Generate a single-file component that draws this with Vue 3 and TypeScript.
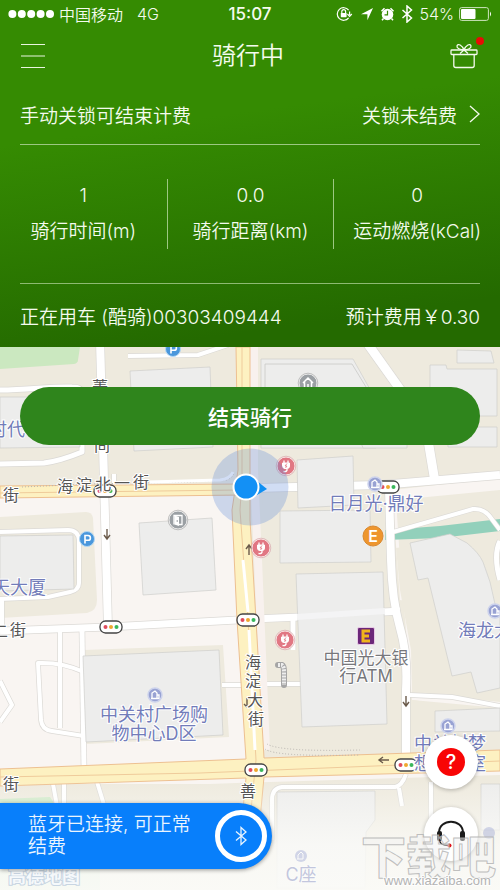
<script setup lang="ts">
interface Stat { value: string; label: string }
interface Road { d: string; w: number }
interface Label { x: number; y: number; text: string; kind: 'street' | 'place' | 'bank'; anchor?: 'start' | 'middle' | 'end' }
interface Point { x: number; y: number }

const stats: Stat[] = [
  { value: '1', label: '骑行时间(m)' },
  { value: '0.0', label: '骑行距离(km)' },
  { value: '0', label: '运动燃烧(kCal)' },
]

const blocks: string[] = [
  'M0 517L86 512Q92 512 93 518L97 600Q97 611 87 613L0 618Z',
  'M84 650L223 645L229 737L86 744Z',
  'M262 499L383 493L388 520L400 610L404 672L398 728Q393 740 384 742L276 748Q268 735 266 720Z',
  'M396 548L497 534L500 545V702L412 693L411 650L400 590Z',
  'M412 700L500 708V748L411 750Z',
  'M0 792L236 783L500 775V890H0Z',
]

const roads: Road[] = [
  { d: 'M0 390C30 390 50 386 72 387Q82 387 82 394V452Q60 461 44 463L0 464', w: 5 },
  { d: 'M128 356L198 355L228 345', w: 4 },
  { d: 'M365 340L402 392L428 440L435 482', w: 9 },
  { d: 'M100 340L104 480L108 628', w: 8 },
  { d: 'M0 631L108 627L237 620', w: 7 },
  { d: 'M252 619L300 617L400 611', w: 7 },
  { d: 'M252 488L380 485L440 480L500 475', w: 8 },
  { d: 'M389 488L391 560Q392 600 400 628Q408 655 406 690V756', w: 8 },
  { d: 'M393 532L473 509Q484 508 491 518L500 530', w: 4 },
  { d: 'M500 541Q493 555 500 580', w: 5 },
  { d: 'M0 532L68 530Q78 530 79 540V583Q79 590 70 592L48 597L0 599', w: 4 },
  { d: 'M2 598V626', w: 4 },
  { d: 'M60 632V728', w: 4 },
  { d: 'M82 631L84 770', w: 5 },
  { d: 'M84 672Q62 662 38 663L41 720Q42 730 52 731L84 736', w: 4 },
  { d: 'M0 681L12 705L0 722', w: 4 },
  { d: 'M293 618V650', w: 5 },
  { d: 'M222 685H248M262 684H302', w: 4 },
  { d: 'M410 695L452 697L500 706', w: 4 },
  { d: 'M114 474V490', w: 4 },
  { d: 'M272 840V800Q272 788 282 787L395 787Q402 786 406 774M399 788L402 806', w: 4 },
  { d: 'M431 782V820', w: 4 },
  { d: 'M53 784L57 806M97 782L105 808M64 783V803', w: 4 },
]

const buildings: string[] = [
  'M0 397H80V447L0 448Z',
  'M130 371L210 367L213 447L134 451Z',
  'M261 359H353L376 400V448H261Z',
  'M457 350L491 351L494 363H457Z',
  'M430 365H446L447 369H497V416H430Z',
  'M448 427H497V447H448Z',
  'M360 440H407V448H363Z',
  'M297 460L353 456L354 505L298 508Z',
  'M280 511L370 510L371 562L280 563Z',
  'M296 574L383 572L387 724L302 727Z',
  'M410 543L450 534L467 543Q479 553 483 562Q491 581 495 604L500 610V688L477 693L471 672L452 676L428 578L418 580Z',
  'M139 523L212 518L216 590L143 595Z',
  'M0 536L73 535L74 589L0 591Z',
  'M83 656L219 650L223 735L86 742Z',
  'M435 711L500 708V731L435 732Z',
  'M277 792L375 791V820L366 832L365 888H277Z',
  'M481 784H500V830H481Z',
]

const lights: Point[] = [
  { x: 105, y: 491 }, { x: 388, y: 487 }, { x: 111, y: 627 },
  { x: 248, y: 620 }, { x: 256, y: 770 }, { x: 406, y: 765 },
]
const parking: Point[] = [{ x: 173, y: 349 }, { x: 87, y: 539 }]
const charging: Point[] = [{ x: 286, y: 466 }, { x: 261, y: 548 }, { x: 285, y: 640 }]
const offices: Point[] = [{ x: 375, y: 484 }, { x: 155, y: 695 }, { x: 495, y: 611 }, { x: 448, y: 726 }]

const spread = (chars: string, points: [number, number][]): Label[] =>
  points.map(([x, y], i) => ({ x, y, text: chars[i], kind: 'street', anchor: 'middle' }))

const labels: Label[] = [
  ...spread('海淀北一街', [[65, 492], [84, 491], [103, 490], [122, 489], [141, 488]]),
  ...spread('海淀大街', [[253, 668], [253, 687], [255, 706], [256, 725]]),
  ...spread('街二街街善', [[11, 501], [0, 637], [18, 636], [11, 790], [248, 797]]),
  ...spread('菁间', [[100, 393], [102, 451]]),
  { x: 25, y: 436, text: '时代', kind: 'place', anchor: 'end' },
  { x: 46, y: 594, text: '天大厦', kind: 'place', anchor: 'end' },
  { x: 376, y: 510, text: '日月光·鼎好', kind: 'place', anchor: 'middle' },
  { x: 458, y: 637, text: '海龙大', kind: 'place', anchor: 'start' },
  { x: 154, y: 721, text: '中关村广场购', kind: 'place', anchor: 'middle' },
  { x: 154, y: 740, text: '物中心D区', kind: 'place', anchor: 'middle' },
  { x: 450, y: 750, text: '中关村梦', kind: 'place', anchor: 'middle' },
  { x: 450, y: 770, text: '想实验室', kind: 'place', anchor: 'middle' },
  { x: 366, y: 664, text: '中国光大银', kind: 'bank', anchor: 'middle' },
  { x: 366, y: 682, text: '行ATM', kind: 'bank', anchor: 'middle' },
]
</script>

<template>
  <main class="screen">
    <header class="panel">
      <div class="status">
        <div class="status-side">
          <svg class="signal" viewBox="0 0 46 10" aria-hidden="true">
            <circle v-for="n in 5" :key="n" :cx="n * 9.4 - 5" cy="5" r="4" fill="#fff" />
          </svg>
          <span>中国移动</span>
          <span class="network">4G</span>
        </div>
        <time class="clock">15:07</time>
        <div class="status-side status-right">
          <svg class="status-icons" viewBox="0 0 78 18" aria-hidden="true">
            <g fill="none" stroke="#fff" stroke-width="1.2">
              <path d="M12.6 5.2A6.3 6.3 0 1 0 12.6 12.8" />
              <path d="M13.6 6.5V10M11.4 9l2.2 2.400L15.800 9" />
              <path d="M5.800 8.500V6.600a1.900 1.900 0 0 1 3.800 0v1.900" />
            </g>
            <rect x="4.800" y="8" width="5.800" height="4.200" rx=".6" fill="#fff" />
            <path d="M25 9.200L37 3L31.400 15.200V9.200Z" fill="#fff" />
            <circle cx="51.500" cy="9.500" r="5.800" fill="#fff" />
            <path d="M45.500 6.200L48.500 3.300M57.500 6.200L54.500 3.300M47.500 13.500L46 15.300M55.500 13.500L57 15.300" stroke="#fff" stroke-width="1.5" />
            <path d="M51.500 5.800V9.800H48.500" fill="none" stroke="#358a02" stroke-width="1.2" />
            <path d="M66.500 5L75.500 13L71 17V1L75.500 5L66.500 13" fill="none" stroke="#fff" stroke-width="1.5" />
          </svg>
          <span>54%</span>
          <svg class="battery" viewBox="0 0 33 14" aria-hidden="true">
            <rect x=".6" y=".6" width="28.800" height="12.800" rx="2" fill="none" stroke="#cfe5c0" />
            <rect x="2" y="2" width="14.500" height="10" rx="1" fill="#fff" />
            <path d="M31 4.500Q33 7 31 9.500Z" fill="#fff" />
          </svg>
        </div>
      </div>

      <nav class="nav">
        <button class="icon-button" type="button" aria-label="菜单">
          <svg width="26" height="26" viewBox="0 0 26 26">
            <path d="M1 1.500H25M1 13H25M1 24.500H25" stroke="#e9f5df" stroke-width="1.2" />
          </svg>
        </button>
        <h1>骑行中</h1>
        <button class="icon-button gift" type="button" aria-label="礼物">
          <svg width="28" height="26" viewBox="0 0 28 26" fill="none" stroke="#f4fbee" stroke-width="1.3">
            <rect x="1" y="7" width="26" height="4.500" rx=".8" />
            <path d="M3.800 11.500V22.500Q3.800 24.500 5.800 24.500H22.200Q24.200 24.500 24.200 22.500V11.500" />
            <path d="M14 7C12 2 8 0 7 3C6.500 5.500 10 6.500 14 7C16 2 20 0 21 3C21.500 5.500 18 6.500 14 7ZM14 7L10 10.500M14 7L18 10.500" />
          </svg>
          <span class="badge"></span>
        </button>
      </nav>

      <div class="row lock-row">
        <span>手动关锁可结束计费</span>
        <a class="lock-link" href="#unsettled">
          关锁未结费
          <svg width="11" height="18" viewBox="0 0 11 18" fill="none" stroke="#f4fbee" stroke-width="1.3">
            <path d="M1 1L10 9L1 17" />
          </svg>
        </a>
      </div>

      <dl class="stats">
        <div v-for="stat in stats" :key="stat.label" class="stat">
          <dt>{{ stat.label }}</dt>
          <dd>{{ stat.value }}</dd>
        </div>
      </dl>

      <div class="row bike-row">
        <span>正在用车 (酷骑)00303409444</span>
        <span>预计费用￥0.30</span>
      </div>
    </header>

    <section class="map">
      <svg class="map-canvas" viewBox="0 347 500 543" preserveAspectRatio="xMidYMin slice" aria-hidden="true">
        <defs>
          <linearGradient id="fade" x1="0" y1="0" x2="0" y2="1">
            <stop offset="0" stop-color="#fbfbf8" stop-opacity="0" />
            <stop offset=".6" stop-color="#fbfbf8" stop-opacity=".8" />
            <stop offset="1" stop-color="#fbfbf8" stop-opacity=".92" />
          </linearGradient>
        </defs>
        <rect y="347" width="500" height="543" fill="#eeeade" />
        <path d="M0 496H236L262 760L500 750V620L400 600L392 490L500 478V490L396 500L400 560L412 700L500 712V784H0Z" fill="#f9f5f2" />
        <path v-for="d in blocks" :key="d" :d="d" fill="#eeeade" />
        <path d="M385 530L440 526L500 519V531L440 538L385 540Z" fill="#92d0bb" />
        <path d="M0 347H80L78 360Q78 363 74 364L0 369Z" fill="#cbe8c0" />
        <path d="M0 799L50 797L56 806L0 812ZM0 870L100 868V890H0Z" fill="#cfe9c8" />

        <g fill="none" stroke-linejoin="round">
          <path v-for="road in roads" :key="'c' + road.d" :d="road.d" :stroke-width="road.w + 1.4" stroke="#dcdad6" />
          <path v-for="road in roads" :key="road.d" :d="road.d" :stroke-width="road.w" stroke="#fff" />
        </g>

        <g class="avenue">
          <path d="M254 347V470L258 560L266 750" fill="none" stroke="#f8f1ee" stroke-width="8" />
          <path d="M236 347L238 470L232 510L237 620L246 759L0 769V786L246 778L242 820H260L264 777L500 771V750L264 758L256 620L250 520L250 347Z" fill="#fdf1c1" stroke="#edc091" />
          <path d="M0 486L240 484V495L0 498Z" fill="#fdf1c1" stroke="#edc091" />
          <path d="M0 777L200 773L500 761M0 493L238 490M242 347V480L240 510L248 620L256 760L251 810" fill="none" stroke="#efcb9b" />
          <path d="M243 560L248 612M249 630L255 750" fill="none" stroke="#fff" stroke-width="3" />
        </g>
        <path d="M22 487L90 484L190 482L226 480Q233 478 234 472M265 749Q275 757 360 755M267 744Q280 752 360 750" fill="none" stroke="#b9b5b0" stroke-width="1" stroke-dasharray="1 2" />
        <path d="M150 482L220 480Q230 479 233 472" fill="none" stroke="#fff" stroke-width="3" />

        <path v-for="d in buildings" :key="d" :d="d" fill="#ededec" stroke="#cececc" stroke-width=".7" />
        <path d="M265 387V364H352L366 387" fill="none" stroke="#c9c9c7" stroke-width=".8" />
        <path d="M297 617L385 611" stroke="#f4f4f5" stroke-width="6" />
        <path d="M278 665H282Q284 666 284 672V685" fill="none" stroke="#a5a5a5" stroke-width="6" stroke-linecap="round" />
        <path d="M278 665H282Q284 666 284 672V685" fill="none" stroke="#eee" stroke-width="4" stroke-dasharray="2 1" />

        <g fill="none" stroke="#6b5b4b" stroke-width="1.400">
          <path d="M107 529V539M104 535L107 539L110 535" />
          <path d="M249 555V545M246 549L249 545L252 549" />
          <path d="M406 696V706M403 702L406 706L409 702" />
          <path d="M389 760H379M383 757L379 760L383 763" />
          <path d="M247 698V707M244 704L247 707" />
        </g>

        <rect y="780" width="500" height="110" fill="url(#fade)" />

        <g v-for="p in parking" :key="'p' + p.y" :transform="`translate(${p.x} ${p.y})`">
          <circle r="7.500" fill="#4a97dc" stroke="#b4d7f2" />
          <path d="M-2 4.500V-3.500H1A2.400 2.400 0 0 1 1 1.300H-2" fill="none" stroke="#fff" stroke-width="1.600" />
        </g>
        <g v-for="p in charging" :key="'z' + p.y" :transform="`translate(${p.x} ${p.y})`">
          <circle r="9" fill="#e17783" stroke="#fbe5e5" />
          <circle r="9.800" fill="none" stroke="#d9a9ad" stroke-width=".7" />
          <path d="M-3.500 -3H3.500V0Q3.500 2.500 1 2.500H-1Q-3.500 2.500 -3.500 0Z" fill="#fff" stroke="#fff" />
          <path d="M-2 -5.500V-3M2 -5.500V-3M1 3Q1.500 6 -2.500 5.500" fill="none" stroke="#fff" stroke-width="1.300" />
          <path d="M1 -2.500L-1 0H1L-.5 2" fill="none" stroke="#e17783" stroke-width=".8" />
        </g>
        <g transform="translate(178 520)">
          <circle r="9" fill="#9ba0a4" stroke="#ececec" />
          <circle r="9.800" fill="none" stroke="#aaa" stroke-width=".7" />
          <path d="M-4 4.500V-4.500H4V4.500H1" fill="none" stroke="#fff" stroke-width="1.300" />
          <path d="M-3.500 -4.500L1 -3V6L-3.500 4.500Z" fill="#fff" />
          <path d="M-.8 0V2" stroke="#9ba0a4" />
        </g>
        <g transform="translate(308 383)">
          <circle r="9" fill="#9ba0a4" stroke="#ececec" />
          <circle r="9.800" fill="none" stroke="#aaa" stroke-width=".7" />
          <path d="M-5 0L0 -5L5 0M-3.500 -1V5H3.500V-1M0 5V1" fill="none" stroke="#fff" stroke-width="1.500" />
        </g>
        <g v-for="p in lights" :key="'l' + p.x" :transform="`translate(${p.x} ${p.y})`">
          <rect x="-11" y="-6" width="22" height="12" rx="5.500" fill="#fff" stroke="#444" stroke-width="1.300" />
          <circle cx="-5.500" r="2" fill="#df4c5d" />
          <circle r="2" fill="#efa830" />
          <circle cx="5.500" r="2" fill="#3bb75b" />
        </g>
        <g v-for="p in offices" :key="'o' + p.x" :transform="`translate(${p.x} ${p.y})`">
          <circle r="7" fill="#98a2d3" stroke="#cdd3ec" stroke-width="1.500" />
          <path d="M-3 3.500V-2L0 -4L2 -2V3.500M2 0H4V3.500H-4" fill="none" stroke="#fff" stroke-width="1.300" />
        </g>
        <g transform="translate(373 536)">
          <circle r="10" fill="#ee962d" stroke="#d98932" />
          <text class="exit" y="6" text-anchor="middle">E</text>
        </g>
        <g transform="translate(366 636)">
          <rect x="-8.500" y="-8.500" width="17" height="17" rx="1.500" fill="#6b2779" stroke="#e7c9e5" />
          <path d="M4 -5H-3V5H4M-3 0H3" fill="none" stroke="#f0b41c" stroke-width="3" />
        </g>

        <g class="labels">
          <text v-for="(l, i) in labels" :key="i" :x="l.x" :y="l.y" :class="l.kind" :text-anchor="l.anchor">{{ l.text }}</text>
          <g opacity=".4">
            <circle cx="301" cy="856" r="6" fill="#98a2d3" />
            <path d="M298 859V855L301 852L303 854V859H297" fill="none" stroke="#fff" />
            <text class="place" x="301" y="881" text-anchor="middle">C座</text>
            <circle cx="489" cy="833" r="6" fill="#98a2d3" />
          </g>
          <text class="brand" x="8" y="883">高德地图</text>
        </g>

        <circle cx="250" cy="487" r="38.500" fill="#5b86d8" fill-opacity=".28" />
        <path d="M257 481L267 489L257 495Z" fill="#0f8ff2" />
        <circle cx="246" cy="487" r="12.500" fill="#1390f5" stroke="#fff" stroke-width="2" />
      </svg>

      <button class="end-ride" type="button">结束骑行</button>

      <div class="bottom">
        <div class="toast" role="status">
          <p>蓝牙已连接, 可正常结费</p>
          <span class="ring">
            <svg width="12" height="20" viewBox="0 0 12 20" fill="none" stroke="#e8f4ff" stroke-width="1.300">
              <path d="M1 5.500L11 14L6 18.500V1.500L11 6L1 14.500" />
            </svg>
          </span>
        </div>
        <div class="actions">
          <button class="fab" type="button" aria-label="帮助"><span class="help">?</span></button>
          <button class="fab" type="button" aria-label="客服">
            <svg width="30" height="28" viewBox="0 0 30 28" fill="none">
              <path d="M3 13C3 -2 27 -2 27 13" stroke="#1b1b1b" stroke-width="2" />
              <rect x="1" y="11" width="5" height="10" rx="2" fill="#1b1b1b" />
              <rect x="24" y="11" width="5" height="10" rx="2" fill="#1b1b1b" />
              <path d="M3.500 20Q4 25.500 12 25.500" stroke="#1b1b1b" stroke-width="1.300" />
              <circle cx="13.500" cy="25.500" r="2" fill="#e2111b" />
            </svg>
          </button>
        </div>
      </div>

      <svg class="watermark" width="144" height="66" viewBox="0 0 144 66" aria-hidden="true">
        <text class="mark-title" x="5" y="50">下载吧</text>
        <text class="mark-url" x="28" y="61">www.xiazaiba.com</text>
      </svg>
    </section>
  </main>
</template>

<style>
body {
  margin: 0;
}
</style>

<style scoped>
.screen {
  display: flex;
  flex-direction: column;
  min-height: 100vh;
  font-family: Inter, "Noto Sans CJK SC", sans-serif;
  font-size: 19px;
  font-weight: 350;
}

.panel {
  color: #f4fbee;
  background: linear-gradient(172deg, #358b02 35%, #246a00 88%);
}

.status {
  display: grid;
  grid-template-columns: 1fr auto 1fr;
  align-items: center;
  height: 28px;
  padding: 0 8px;
  font-size: 16px;
}

.status-side {
  display: flex;
  align-items: center;
  gap: 5px;
}

.status-right {
  justify-content: flex-end;
}

.signal {
  width: 46px;
  height: 10px;
}

.network {
  margin-left: 9px;
}

.clock {
  font-size: 17px;
  font-weight: 500;
}

.status-icons {
  width: 78px;
  height: 18px;
}

.battery {
  width: 33px;
  height: 14px;
}

.nav {
  display: flex;
  align-items: center;
  justify-content: space-between;
  height: 56px;
  padding: 0 20px;
}

h1 {
  margin: 0;
  font-size: 24px;
  font-weight: 350;
  line-height: 36px;
}

.icon-button {
  position: relative;
  display: flex;
  padding: 0;
  border: 0;
  background: none;
}

.gift {
  margin-right: 2px;
}

.badge {
  position: absolute;
  top: -6px;
  right: -6px;
  width: 8px;
  height: 8px;
  border-radius: 50%;
  background: #e80c06;
}

.row {
  display: flex;
  align-items: center;
  justify-content: space-between;
  margin: 0 20px;
  white-space: nowrap;
}

.lock-row {
  height: 60px;
  border-bottom: 1px solid #9cc882;
}

.lock-link {
  display: flex;
  align-items: center;
  gap: 12px;
  color: inherit;
  text-decoration: none;
}

.stats {
  display: grid;
  grid-template-columns: repeat(3, 1fr);
  margin: 0;
  padding: 34px 0;
}

.stat {
  display: flex;
  flex-direction: column-reverse;
  justify-content: center;
  height: 70px;
  text-align: center;
  line-height: 36px;
  white-space: nowrap;
}

.stat + .stat {
  border-left: 1px solid #9cc882;
}

.stat dd {
  margin: 0;
}

.bike-row {
  height: 63px;
  border-top: 1px solid #8dba72;
}

.map {
  position: relative;
  display: flex;
  flex: 1;
  flex-direction: column;
  min-height: 543px;
  overflow: hidden;
}

.map-canvas {
  position: absolute;
  inset: 0;
  width: 100%;
  height: 100%;
}

.labels text {
  font-family: Inter, "Noto Sans CJK SC", sans-serif;
  font-size: 17px;
  font-weight: 400;
  stroke: #fff;
  stroke-width: 2px;
  paint-order: stroke;
}

.labels .street {
  fill: #555;
  font-size: 16px;
}

.labels .place {
  fill: #727cb9;
  font-size: 18px;
}

.labels .bank {
  fill: #77777b;
}

.labels .brand {
  fill: #f6f9fb;
  stroke: #c8d5e2;
  font-size: 18px;
  font-weight: 700;
}

.exit {
  fill: #fff;
  font-size: 16px;
  font-weight: 600;
}

.end-ride {
  position: relative;
  height: 58px;
  margin: 40px 20px 0;
  border: 0;
  border-radius: 29px;
  background: #2f851c;
  color: #fff;
  font: inherit;
  font-size: 21px;
  font-weight: 500;
}

.bottom {
  position: relative;
  display: flex;
  align-items: flex-end;
  justify-content: space-between;
  margin-top: auto;
  padding: 0 22px 21px 0;
}

.toast {
  display: flex;
  align-items: center;
  justify-content: space-between;
  box-sizing: border-box;
  width: 272px;
  height: 66px;
  padding: 0 5px 0 28px;
  border-radius: 0 33px 33px 0;
  background: #087ffb;
  box-shadow: 0 1px 4px #0006;
  color: #eaf5ff;
}

.toast p {
  width: 172px;
  margin: 0;
  line-height: 22px;
}

.ring {
  display: flex;
  align-items: center;
  justify-content: center;
  box-sizing: border-box;
  width: 52px;
  height: 52px;
  border: 5px solid #fff;
  border-radius: 50%;
}

.actions {
  display: flex;
  flex-direction: column;
  gap: 18px;
  padding-bottom: 8px;
}

.fab {
  display: flex;
  align-items: center;
  justify-content: center;
  width: 54px;
  height: 54px;
  padding: 0;
  border: 0;
  border-radius: 50%;
  background: #fff;
  box-shadow: 0 1px 4px #0004;
}

.help {
  width: 28px;
  border-radius: 50%;
  background: #f80505;
  color: #fff;
  font-family: Inter, sans-serif;
  font-size: 20px;
  font-weight: 500;
  line-height: 28px;
}

.watermark {
  position: absolute;
  right: 0;
  bottom: 0;
  pointer-events: none;
}

.watermark text {
  stroke: #b0b0b0;
  stroke-opacity: .8;
  fill: #f2f2f2;
  fill-opacity: .5;
}

.mark-title {
  font-family: "Noto Sans CJK SC", sans-serif;
  font-size: 45px;
  font-weight: 900;
}

.watermark .mark-url {
  fill: #b3b3b3;
  fill-opacity: 1;
  stroke: #fff;
  stroke-width: 2px;
  paint-order: stroke;
  font-family: "Liberation Sans", sans-serif;
  font-size: 13px;
}
</style>
